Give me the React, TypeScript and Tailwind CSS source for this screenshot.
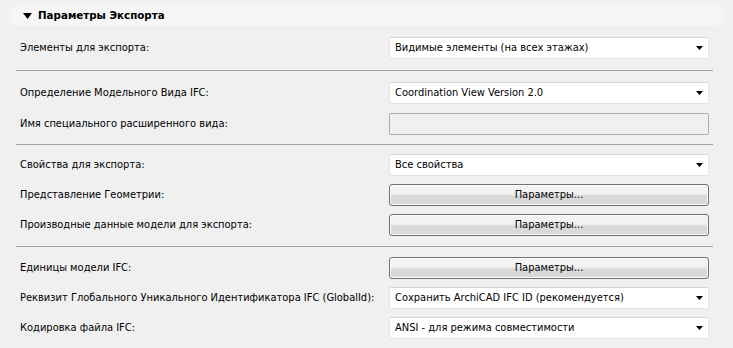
import type { ReactNode } from 'react'

const font = { fontFamily: 'Tahoma, "DejaVu Sans Condensed", "Liberation Sans", sans-serif' }

function Arrow() {
  return (
    <svg width="7" height="4" viewBox="0 0 7 4" className="shrink-0">
      <path d="M0 0h7L3.5 4z" fill="#000" />
    </svg>
  )
}

function Select({ value }: { value: string }) {
  return (
    <div className="flex h-[22px] w-[320px] items-center justify-between rounded-[2px] border border-[#e3e3e3] border-t-[#d5d5d5] bg-white pl-[5px] pr-[5px]">
      <span className="whitespace-nowrap">{value}</span>
      <Arrow />
    </div>
  )
}

function Button({ label }: { label: string }) {
  return (
    <div className="flex h-[22px] w-[320px] items-center justify-center rounded-[3px] border border-[#707070] bg-gradient-to-b from-[#f2f2f2] from-45% to-[#d9d9d9] to-55% shadow-[inset_0_0_0_1px_#fcfcfc]">
      {label}
    </div>
  )
}

function Field() {
  return <div className="h-[22px] w-[320px] rounded-[2px] border border-[#adadad] bg-[#f0f0f0]" />
}

function Row({ label, children }: { label: string; children: ReactNode }) {
  return (
    <div className="flex h-[22px] items-center justify-between">
      <span className="whitespace-nowrap">{label}</span>
      {children}
    </div>
  )
}

function Divider() {
  return <div className="-mx-[4px] h-px bg-[#a0a0a0]" />
}

export default function App() {
  return (
    <div className="h-[348px] w-[733px] bg-[#f0f0f0] text-[11px] text-black" style={font}>
      <div className="pt-[5px] pl-[8px] pr-[9px]">
        <div className="flex h-[21px] items-center gap-[6px] rounded-full bg-[#f6f6f6] pl-[15px]">
          <svg width="9" height="6" viewBox="0 0 9 6">
            <path d="M0 0h9L4.5 6z" fill="#000" />
          </svg>
          <span className="font-bold text-[10.3px] [font-family:'DejaVu_Sans',sans-serif]">Параметры Экспорта</span>
        </div>
      </div>

      <div className="flex flex-col pl-[20px] pr-[24px] pt-[11px]">
        <Row label="Элементы для экспорта:">
          <Select value="Видимые элементы (на всех этажах)" />
        </Row>
        <div className="py-[11px]">
          <Divider />
        </div>
        <div className="flex flex-col gap-[9px]">
          <Row label="Определение Модельного Вида IFC:">
            <Select value="Coordination View Version 2.0" />
          </Row>
          <Row label="Имя специального расширенного вида:">
            <Field />
          </Row>
        </div>
        <div className="py-[9px]">
          <Divider />
        </div>
        <div className="flex flex-col gap-[8px]">
          <Row label="Свойства для экспорта:">
            <Select value="Все свойства" />
          </Row>
          <Row label="Представление Геометрии:">
            <Button label="Параметры..." />
          </Row>
          <Row label="Производные данные модели для экспорта:">
            <Button label="Параметры..." />
          </Row>
        </div>
        <div className="py-[10px]">
          <Divider />
        </div>
        <div className="flex flex-col gap-[8px]">
          <Row label="Единицы модели IFC:">
            <Button label="Параметры..." />
          </Row>
          <Row label="Реквизит Глобального Уникального Идентификатора IFC (GlobalId):">
            <Select value="Сохранить ArchiCAD IFC ID (рекомендуется)" />
          </Row>
          <Row label="Кодировка файла IFC:">
            <Select value="ANSI - для режима совместимости" />
          </Row>
        </div>
      </div>
    </div>
  )
}
